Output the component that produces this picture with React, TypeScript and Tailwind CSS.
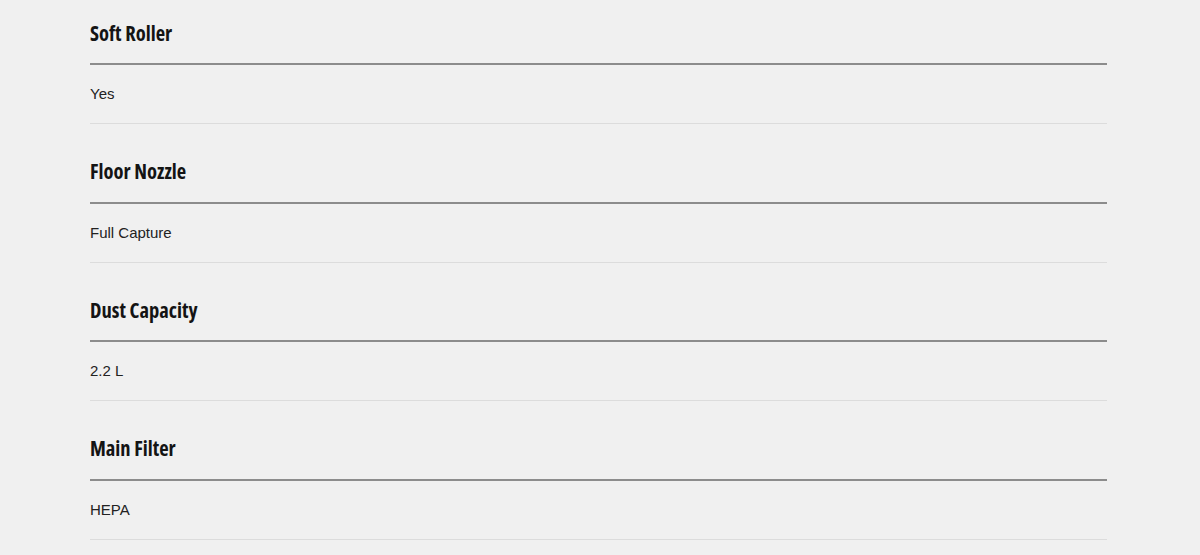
import React from "react";

const specs = [
  { label: "Soft Roller", value: "Yes" },
  { label: "Floor Nozzle", value: "Full Capture" },
  { label: "Dust Capacity", value: "2.2 L" },
  { label: "Main Filter", value: "HEPA" },
];

export default function App() {
  return (
    <div className="w-[1200px] h-[555px] overflow-hidden bg-[#f0f0f0]">
      <div className="ml-[90px] w-[1017px] flex flex-col gap-[14.67px]">
        {specs.map((s) => (
          <div key={s.label} className="pt-[17.5px]">
            <h3 className="text-[20.5px] leading-[30px] font-bold text-[#141414] [font-family:'Open_Sans',sans-serif] [font-stretch:75%] pb-[15.5px] border-b-2 border-[#8c8c8c]">
              {s.label}
            </h3>
            <div className="pt-[19px] pb-[19px] border-b border-[#dcdcdc] text-[15px] leading-[20px] text-[#222] [font-family:'Liberation_Sans',Arial,sans-serif]">
              {s.value}
            </div>
          </div>
        ))}
      </div>
    </div>
  );
}
